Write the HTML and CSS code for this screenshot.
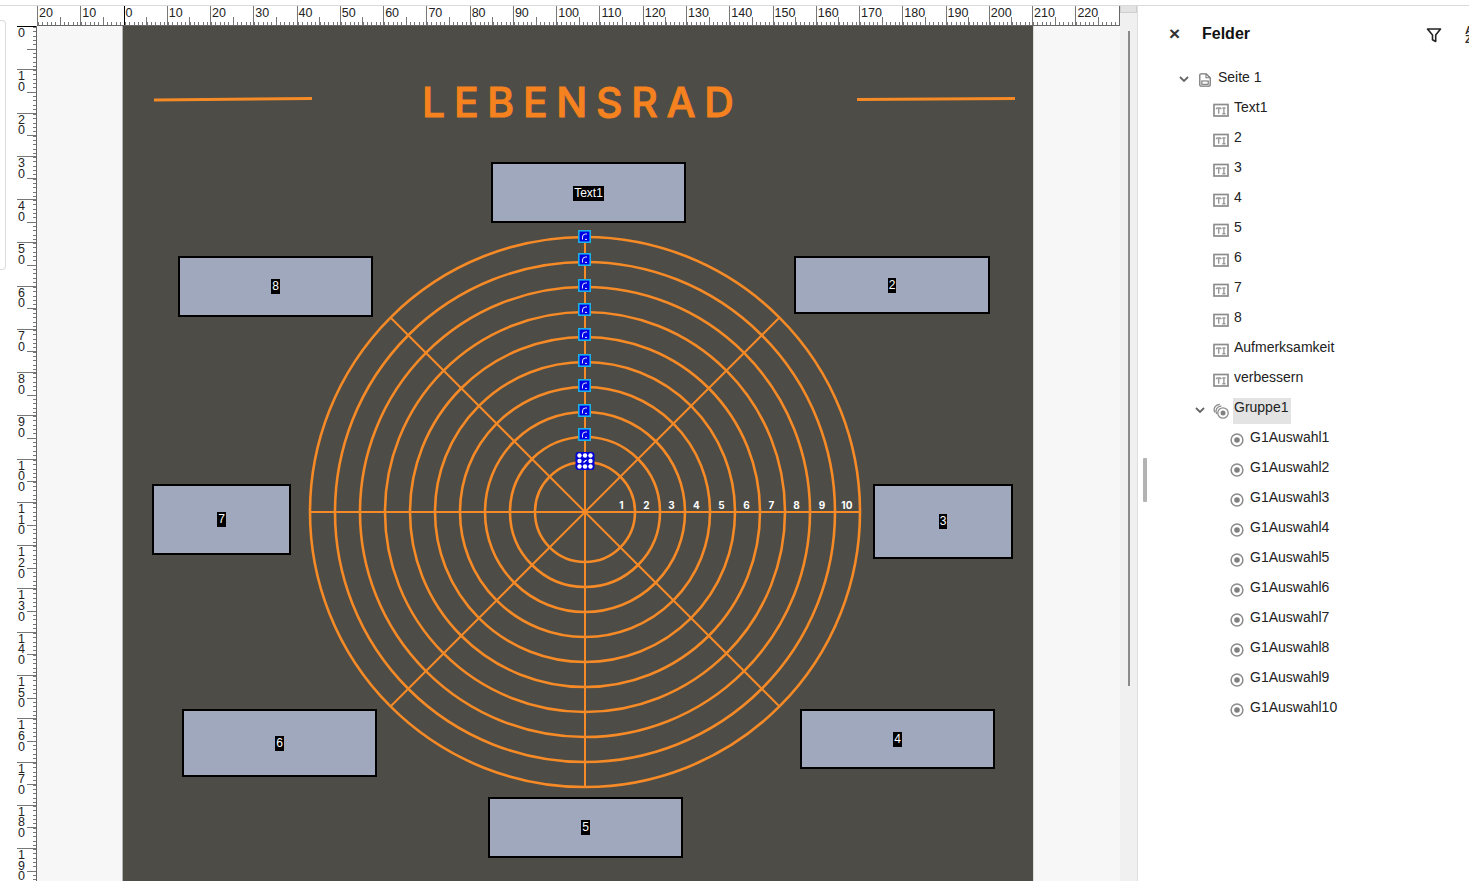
FILE: index.html
```html
<!DOCTYPE html>
<html lang="de">
<head>
<meta charset="utf-8">
<title>Felder</title>
<link rel="stylesheet" href="styles.css">
</head>
<body>
<svg class="sprite" width="0" height="0">
  <symbol id="i-text" viewBox="0 0 16 14">
    <rect x="1" y="1.5" width="14" height="11.500" fill="none" stroke="#8c8c8c" stroke-width="1.700"/>
    <path d="M3.500 5h4.400M5.700 5v5.800M9.300 5h3.200M10.900 5v5.800M9.300 10.800h3.200M3.500 5v1.300M7.900 5v1.300" fill="none" stroke="#999" stroke-width="1.400"/>
  </symbol>
  <symbol id="i-radio" viewBox="0 0 14 14">
    <circle cx="7" cy="7" r="5.900" fill="none" stroke="#8c8c8c" stroke-width="1.500"/>
    <circle cx="7" cy="7" r="2.800" fill="#808080"/>
  </symbol>
  <symbol id="i-group" viewBox="0 0 16 16">
    <path d="M1.900 9.300A5.200 5.200 0 0 1 6.800 1.500" fill="none" stroke="#8c8c8c" stroke-width="1.300"/>
    <path d="M3.600 11A5.200 5.200 0 0 1 8.500 3.200" fill="none" stroke="#8c8c8c" stroke-width="1.300"/>
    <circle cx="10" cy="10" r="5.200" fill="#fff" stroke="#8c8c8c" stroke-width="1.300"/>
    <circle cx="10" cy="10" r="2.500" fill="#808080"/>
  </symbol>
  <symbol id="i-page" viewBox="0 0 12 14">
    <path d="M.8 2a1.200 1.200 0 0 1 1.200-1.200h5.200l4 4V12a1.200 1.200 0 0 1-1.200 1.200H2A1.200 1.200 0 0 1 .8 12z" fill="none" stroke="#777" stroke-width="1.300"/>
    <path d="M7 1v3.800h4" fill="none" stroke="#777" stroke-width="1.100"/>
    <rect x="2.800" y="8" width="6.400" height="3.300" fill="none" stroke="#777" stroke-width="1.100"/>
  </symbol>
  <symbol id="i-chev" viewBox="0 0 10 6">
    <path d="M1 1l4 4 4-4" fill="none" stroke="#666" stroke-width="1.800"/>
  </symbol>
  <symbol id="h-blue" viewBox="0 0 13 13">
    <rect x=".8" y=".8" width="11.400" height="11.400" fill="#0000e6" stroke="#1cb0e8" stroke-width="1.600"/>
    <path d="M4.500 9.500V7a3 3 0 0 1 3-3H9M7 9.400h2" fill="none" stroke="#fff" stroke-width=".9"/>
  </symbol>
</svg>

<div class="topline"></div>
<div class="app">
  <div class="gutter"><div class="gutter-tab"></div></div>

  <main class="editor">
    <div class="hruler-row">
      <div class="corner"></div>
      <div class="hruler">
        <div class="hc">20</div><div class="hc">10</div><div class="hc hc-zero">0</div><div class="hc">10</div><div class="hc">20</div><div class="hc">30</div><div class="hc">40</div><div class="hc">50</div><div class="hc">60</div><div class="hc">70</div><div class="hc">80</div><div class="hc">90</div><div class="hc">100</div><div class="hc">110</div><div class="hc">120</div><div class="hc">130</div><div class="hc">140</div><div class="hc">150</div><div class="hc">160</div><div class="hc">170</div><div class="hc">180</div><div class="hc">190</div><div class="hc">200</div><div class="hc">210</div><div class="hc">220</div>
      </div>
    </div>
    <div class="work-row">
      <div class="vruler">
        <div class="vc vc-zero"><span>0</span></div><div class="vc"><span>10</span></div><div class="vc"><span>20</span></div><div class="vc"><span>30</span></div><div class="vc"><span>40</span></div><div class="vc"><span>50</span></div><div class="vc"><span>60</span></div><div class="vc"><span>70</span></div><div class="vc"><span>80</span></div><div class="vc"><span>90</span></div><div class="vc"><span>100</span></div><div class="vc"><span>110</span></div><div class="vc"><span>120</span></div><div class="vc"><span>130</span></div><div class="vc"><span>140</span></div><div class="vc"><span>150</span></div><div class="vc"><span>160</span></div><div class="vc"><span>170</span></div><div class="vc"><span>180</span></div><div class="vc"><span>190</span></div>
      </div>
      <div class="workspace">
        <div class="page">
          <svg class="wheel" viewBox="123 26 910 855" width="910" height="855" aria-hidden="true">
            <g fill="none" stroke="#f58a26" stroke-width="2.600">
              <circle cx="585" cy="512" r="50"/>
              <circle cx="585" cy="512" r="75"/>
              <circle cx="585" cy="512" r="100"/>
              <circle cx="585" cy="512" r="125"/>
              <circle cx="585" cy="512" r="150"/>
              <circle cx="585" cy="512" r="175"/>
              <circle cx="585" cy="512" r="200"/>
              <circle cx="585" cy="512" r="225"/>
              <circle cx="585" cy="512" r="250"/>
              <circle cx="585" cy="512" r="275"/>
              <path stroke-width="2" d="M310 512H860M585 237V787M390.500 317.500L779.500 706.500M779.500 317.500L390.500 706.500"/>
            </g>
            <g fill="#f58a26">
              <polygon points="154,98.500 312,97 312,100 154,101.500"/>
              <polygon points="857,98 1015,97 1015,100 857,101"/>
            </g>
            <g class="ring-nums" text-anchor="middle">
              <text x="621.500" y="509">1</text>
              <text x="646.500" y="509">2</text>
              <text x="671.500" y="509">3</text>
              <text x="696.500" y="509">4</text>
              <text x="721.500" y="509">5</text>
              <text x="746.500" y="509">6</text>
              <text x="771.500" y="509">7</text>
              <text x="796.500" y="509">8</text>
              <text x="822" y="509">9</text>
              <text x="847" y="509">10</text>
            </g>
            <use href="#h-blue" x="578" y="230" width="13" height="13"/>
            <use href="#h-blue" x="578" y="253" width="13" height="13"/>
            <use href="#h-blue" x="578" y="279" width="13" height="13"/>
            <use href="#h-blue" x="578" y="303" width="13" height="13"/>
            <use href="#h-blue" x="578" y="328" width="13" height="13"/>
            <use href="#h-blue" x="578" y="354" width="13" height="13"/>
            <use href="#h-blue" x="578" y="379" width="13" height="13"/>
            <use href="#h-blue" x="578" y="404" width="13" height="13"/>
            <use href="#h-blue" x="578" y="428" width="13" height="13"/>
            <rect x="575.500" y="452" width="19" height="18" rx="3" fill="#0000d8"/>
            <g fill="#fff">
              <circle cx="579.500" cy="455.500" r="2.200"/><circle cx="585" cy="455.500" r="2.200"/><circle cx="590.500" cy="455.500" r="2.200"/>
              <circle cx="579.500" cy="461" r="2.200"/><circle cx="590.500" cy="461" r="2.200"/>
              <circle cx="579.500" cy="466.500" r="2.200"/><circle cx="585" cy="466.500" r="2.200"/><circle cx="590.500" cy="466.500" r="2.200"/>
            </g>
            <path d="M583.500 462.500l3-2.500" stroke="#fff" stroke-width="1.200" fill="none"/>
          </svg>
          <h1 class="title">LEBENSRAD</h1>
          <div class="field f-text1"><span>Text1</span></div>
          <div class="field f-8"><span>8</span></div>
          <div class="field f-2"><span>2</span></div>
          <div class="field f-7"><span>7</span></div>
          <div class="field f-3"><span>3</span></div>
          <div class="field f-6"><span>6</span></div>
          <div class="field f-4"><span>4</span></div>
          <div class="field f-5"><span>5</span></div>
        </div>
      </div>
    </div>
  </main>

  <div class="scrollbar">
    <div class="scroll-cap"></div>
    <div class="scroll-thumb"></div>
  </div>

  <aside class="panel">
    <div class="splitter"></div>
    <div class="panel-inner">
      <header class="panel-head">
        <span class="close">×</span>
        <h2>Felder</h2>
        <svg class="filter" width="16" height="16" viewBox="0 0 16 16"><path d="M1.500 2h13L9.700 8v6.500L6.500 12.800V8z" fill="none" stroke="#222" stroke-width="1.600" stroke-linejoin="round"/></svg>
        <span class="sort">AZ</span>
      </header>
      <ul class="tree">
        <li class="row lv0"><svg class="chev chev-page"><use href="#i-chev"/></svg><svg class="ico-page"><use href="#i-page"/></svg><span class="lbl">Seite 1</span></li>
        <li class="row lv1"><svg class="ico"><use href="#i-text"/></svg><span class="lbl">Text1</span></li>
        <li class="row lv1"><svg class="ico"><use href="#i-text"/></svg><span class="lbl">2</span></li>
        <li class="row lv1"><svg class="ico"><use href="#i-text"/></svg><span class="lbl">3</span></li>
        <li class="row lv1"><svg class="ico"><use href="#i-text"/></svg><span class="lbl">4</span></li>
        <li class="row lv1"><svg class="ico"><use href="#i-text"/></svg><span class="lbl">5</span></li>
        <li class="row lv1"><svg class="ico"><use href="#i-text"/></svg><span class="lbl">6</span></li>
        <li class="row lv1"><svg class="ico"><use href="#i-text"/></svg><span class="lbl">7</span></li>
        <li class="row lv1"><svg class="ico"><use href="#i-text"/></svg><span class="lbl">8</span></li>
        <li class="row lv1"><svg class="ico"><use href="#i-text"/></svg><span class="lbl">Aufmerksamkeit</span></li>
        <li class="row lv1"><svg class="ico"><use href="#i-text"/></svg><span class="lbl">verbessern</span></li>
        <li class="row lv1g"><svg class="chev chev-group"><use href="#i-chev"/></svg><svg class="ico-group"><use href="#i-group"/></svg><span class="lbl selected">Gruppe1</span></li>
        <li class="row lv2"><svg class="ico-radio"><use href="#i-radio"/></svg><span class="lbl">G1Auswahl1</span></li>
        <li class="row lv2"><svg class="ico-radio"><use href="#i-radio"/></svg><span class="lbl">G1Auswahl2</span></li>
        <li class="row lv2"><svg class="ico-radio"><use href="#i-radio"/></svg><span class="lbl">G1Auswahl3</span></li>
        <li class="row lv2"><svg class="ico-radio"><use href="#i-radio"/></svg><span class="lbl">G1Auswahl4</span></li>
        <li class="row lv2"><svg class="ico-radio"><use href="#i-radio"/></svg><span class="lbl">G1Auswahl5</span></li>
        <li class="row lv2"><svg class="ico-radio"><use href="#i-radio"/></svg><span class="lbl">G1Auswahl6</span></li>
        <li class="row lv2"><svg class="ico-radio"><use href="#i-radio"/></svg><span class="lbl">G1Auswahl7</span></li>
        <li class="row lv2"><svg class="ico-radio"><use href="#i-radio"/></svg><span class="lbl">G1Auswahl8</span></li>
        <li class="row lv2"><svg class="ico-radio"><use href="#i-radio"/></svg><span class="lbl">G1Auswahl9</span></li>
        <li class="row lv2"><svg class="ico-radio"><use href="#i-radio"/></svg><span class="lbl">G1Auswahl10</span></li>
      </ul>
    </div>
  </aside>
</div>
</body>
</html>
```

FILE: styles.css
```css
* { box-sizing: border-box; }
html, body { margin: 0; height: 100%; overflow: hidden; background: #fff; }
body { font-family: "Liberation Sans", Arial, sans-serif; color: #222; display: flex; flex-direction: column; }
.sprite { position: absolute; }

.topline { height: 6px; flex: none; background: #fff; border-bottom: 1px solid #d9d9d9; }
.app { flex: 1; display: flex; min-height: 0; }

.gutter { width: 17px; flex: none; padding: 14px 0 0 0; }
.gutter-tab { width: 6px; height: 250px; border: 1px solid #dcdcdc; border-left: 0; border-radius: 0 4px 4px 0; }

.editor { width: 1103px; flex: none; display: flex; flex-direction: column; min-height: 0; }
.hruler-row { display: flex; height: 20px; flex: none; }
.corner { width: 20px; flex: none; background: #fff; }
.hruler { flex: 1; display: flex; overflow: hidden; background: #fff; border-bottom: 1px solid #666; border-right: 1px solid #666; color: #222; font-size: 12.5px; line-height: 14px; }
.hc { width: 43.27px; flex: none; padding-left: 1px; position: relative; border-left: 1px solid #777; white-space: nowrap; }
.hc::before { content: ""; position: absolute; left: 21.6px; bottom: 0; width: 1px; height: 8px; background: #777; }
.hc::after { content: ""; position: absolute; left: 0; right: 0; bottom: 0; height: 3px; background: repeating-linear-gradient(90deg, #777 0 1px, transparent 1px 4.327px); }
.hc-zero { border-left-color: #000; }

.work-row { flex: 1; display: flex; min-height: 0; }
.vruler { width: 20px; flex: none; background: #fff; border-right: 1px solid #666; overflow: hidden; }
.vc { height: 43.27px; position: relative; border-top: 1px solid #777; font-size: 12.5px; line-height: 10.700px; color: #222; }
.vc span { display: block; width: 9px; margin: 1px 0 0 1px; word-break: break-all; }
.vc::before { content: ""; position: absolute; right: 0; top: 21.6px; width: 9px; height: 1px; background: #777; }
.vc::after { content: ""; position: absolute; right: 0; top: 0; bottom: 0; width: 3px; background: repeating-linear-gradient(180deg, #777 0 1px, transparent 1px 4.327px); }
.vc-zero { border-top-color: #000; }

.workspace { flex: 1; background: #f7f7f7; padding-left: 86px; overflow: hidden; min-width: 0; }
.page { width: 910px; height: 855px; position: relative; background: #4d4c46; box-shadow: -1px 0 0 #b5b5b5, 1px 0 0 #dcdcdc; overflow: hidden; }
.wheel { position: absolute; left: 0; top: 0; display: block; }
.ring-nums { fill: #fff; font-family: Inter, "Liberation Sans", sans-serif; font-weight: 700; font-size: 10px; letter-spacing: .2px; }

.title { position: absolute; left: 299px; top: 52px; margin: 0; font-family: Inter, "Liberation Sans", sans-serif; font-size: 41px; line-height: 48px; font-weight: 500; letter-spacing: 8.700px; color: #f5821f; white-space: nowrap; -webkit-text-stroke: .9px #f5821f; }

.field { position: absolute; display: flex; align-items: center; justify-content: center; background: #a0a8bd; border: 2px solid #000; }
.field span { background: #000; color: #fff; font-size: 12px; line-height: 15px; padding: 0 1px; }
.f-text1 { left: 368px; top: 136px; width: 195px; height: 61px; padding-top: 2px; }
.f-8 { left: 55px; top: 230px; width: 195px; height: 61px; }
.f-2 { left: 671px; top: 230px; width: 196px; height: 58px; }
.f-7 { left: 29px; top: 458px; width: 139px; height: 71px; }
.f-3 { left: 750px; top: 458px; width: 140px; height: 75px; }
.f-6 { left: 59px; top: 683px; width: 195px; height: 68px; }
.f-4 { left: 677px; top: 683px; width: 195px; height: 60px; }
.f-5 { left: 365px; top: 771px; width: 195px; height: 61px; }

.scrollbar { width: 18px; flex: none; background: #f0f0f0; border-right: 1px solid #dedede; position: relative; }
.scroll-cap { height: 7px; background: #e3e3e3; border: 1px solid #cfcfcf; border-top: 0; }
.scroll-thumb { width: 2px; height: 655px; margin: 18px 0 0 8px; background: #8a8a8a; }

.panel { flex: 1; min-width: 0; display: flex; background: #fff; overflow: hidden; position: relative; }
.splitter { position: absolute; left: 5px; top: 452px; width: 4px; height: 44px; background: #b3b3b3; border-radius: 1px; }
.panel-inner { width: 100%; }

.panel-head { display: flex; align-items: center; height: 42px; padding-top: 13px; white-space: nowrap; }
.close { width: 64px; padding-left: 31px; flex: none; font-size: 19px; font-weight: 700; color: #333; line-height: 20px; }
.panel-head h2 { margin: 0; width: 224px; flex: none; font-size: 16px; font-weight: 700; color: #111; line-height: 20px; }
.filter { flex: none; margin-top: 3px; }
.sort { flex: none; width: 9px; margin-left: 23px; margin-top: 2px; font-size: 11.500px; line-height: 9px; font-weight: 700; color: #333; word-break: break-all; white-space: normal; }

.tree { list-style: none; margin: 17px 0 0; padding: 0; font-size: 14px; color: #222; }
.row { height: 30px; display: flex; align-items: center; position: relative; white-space: nowrap; }
.lbl { line-height: 16px; margin-top: -6px; }
.chev { width: 10px; height: 6px; flex: none; }
.chev-page { margin-right: 10px; margin-top: -2px; }
.chev-group { margin-right: 8px; margin-top: 0; }
.ico { width: 16px; height: 14px; flex: none; margin-right: 5px; margin-top: 0; }
.ico-page { width: 12px; height: 14px; flex: none; margin-right: 7px; margin-top: 0; }
.ico-group { width: 16px; height: 16px; flex: none; margin-right: 5px; margin-top: 2px; }
.ico-radio { width: 14px; height: 14px; flex: none; margin-right: 6px; margin-top: 0; }
.lv0 { padding-left: 41px; }
.lv1 { padding-left: 75px; }
.lv1g { padding-left: 57px; }
.lv2 { padding-left: 92px; }
.selected { background: #e3e3e3; height: 26px; line-height: 18px; margin-top: 2px; margin-left: -1px; padding: 0 1px; width: 58px; }
```
